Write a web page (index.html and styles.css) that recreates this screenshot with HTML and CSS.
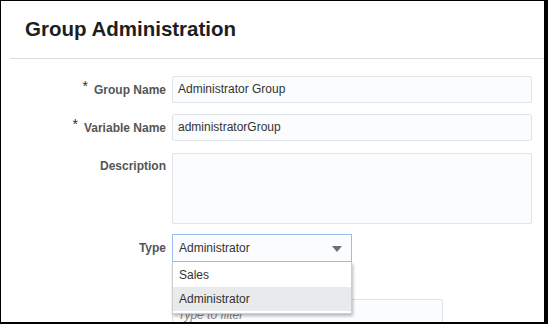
FILE: index.html
```html
<!DOCTYPE html>
<html>
<head>
<meta charset="utf-8">
<link rel="stylesheet" href="styles.css">
</head>
<body>
<div class="frame">
  <header class="head">
    <h1 class="title">Group Administration</h1>
  </header>
  <div class="form">
    <div class="lbl"><span class="req">*</span>Group Name</div>
    <div class="inp">Administrator Group</div>

    <div class="lbl"><span class="req">*</span>Variable Name</div>
    <div class="inp">administratorGroup</div>

    <div class="lbl lbl-desc">Description</div>
    <div class="inp area"></div>

    <div class="lbl lbl-type">Type</div>
    <div class="select-wrap">
      <div class="select">
        <span>Administrator</span>
        <span class="caret"></span>
      </div>
      <ul class="list">
        <li class="opt">Sales</li>
        <li class="opt active">Administrator</li>
      </ul>
    </div>

    <div class="lbl"></div>
    <div class="inp filter"><span class="ph">Type to filter</span></div>
  </div>
</div>
</body>
</html>
```

FILE: styles.css
```css
html, body {
  margin: 0;
  padding: 0;
  background: #fff;
}
.frame {
  box-sizing: border-box;
  width: 548px;
  height: 324px;
  border-style: solid;
  border-color: #000;
  border-width: 1px 4px 2px 1px;
  overflow: hidden;
  font-family: "Liberation Sans", Arial, sans-serif;
  background: #fff;
}
.head {
  margin-left: 9px;
  padding: 16px 0 17px 15px;
  border-bottom: 1px solid #d6dfe6;
}
.title {
  margin: 0;
  font-size: 20.5px;
  line-height: 24px;
  font-weight: bold;
  color: #1e1e1e;
}
.form {
  display: grid;
  grid-template-columns: 165px 360px;
  column-gap: 6px;
  row-gap: 10px;
  padding-top: 17px;
  align-items: start;
}
.lbl {
  text-align: right;
  font-size: 12px;
  font-weight: bold;
  line-height: 27px;
  color: #555;
}
.req {
  color: #1f2d3a;
  font-size: 14px;
  font-weight: normal;
  margin-right: 6px;
  position: relative;
  top: -3px;
}
.inp {
  box-sizing: border-box;
  height: 27px;
  border: 1px solid #dfe4e8;
  border-radius: 2px;
  background: #fbfcfd;
  padding-left: 5px;
  font-size: 12px;
  line-height: 25px;
  color: #333;
}
.lbl-desc, .area {
  margin-top: 1px;
}
.area {
  height: 71px;
}
.lbl-type {
  line-height: 28px;
}
.select-wrap {
  position: relative;
  width: 180px;
}
.select {
  box-sizing: border-box;
  height: 28px;
  border: 1px solid #9dbcee;
  background: #fbfcfd;
  padding: 0 9px 0 6px;
  display: flex;
  align-items: center;
  justify-content: space-between;
  font-size: 12px;
  color: #333;
}
.caret {
  width: 0;
  height: 0;
  border-left: 5px solid transparent;
  border-right: 5px solid transparent;
  border-top: 6px solid #707070;
  margin-top: 1px;
}
.list {
  position: absolute;
  left: 0;
  top: 28px;
  width: 180px;
  box-sizing: border-box;
  margin: 0;
  padding: 1px 0 2px;
  list-style: none;
  background: #fff;
  border: 1px solid #c9ced3;
  border-top: none;
  box-shadow: 1px 2px 3px rgba(0, 0, 0, 0.28);
  z-index: 2;
}
.opt {
  height: 24px;
  line-height: 24px;
  padding-left: 6px;
  font-size: 12px;
  color: #333;
}
.opt.active {
  background: #e9eaeb;
}
.filter {
  width: 271px;
  height: 34px;
  margin-top: 27px;
  line-height: 30px;
}
.ph {
  font-style: italic;
  color: #888;
}
```
